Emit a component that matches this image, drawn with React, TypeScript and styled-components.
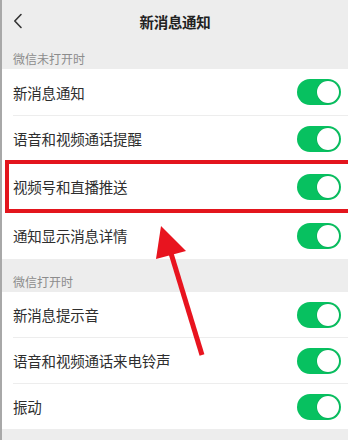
import React from "react";
import styled, { createGlobalStyle } from "styled-components";

const GlobalStyle = createGlobalStyle`
  html, body { margin: 0; padding: 0; background: #ededed; }
  body { font-family: "Noto Sans CJK SC", "Noto Sans", sans-serif; }
  * { box-sizing: border-box; }
`;

const Page = styled.div`
  position: relative;
  width: 348px;
  height: 440px;
  overflow: hidden;
  background: #ededed;
  border-left: 2px solid #a8a8a8;
  display: flex;
  flex-direction: column;
`;

const Header = styled.header`
  height: 42px;
  display: grid;
  grid-template-columns: 44px 1fr 44px;
  align-items: center;
`;

const Back = styled.div`
  display: flex;
  align-items: center;
  padding-left: 11px;
  height: 100%;
`;

const Title = styled.h1`
  margin: 0;
  text-align: center;
  font-size: 14.5px;
  font-weight: 700;
  color: #222;
  letter-spacing: -0.3px;
`;

const SectionLabel = styled.div<{ $h: number }>`
  height: ${(p) => p.$h}px;
  display: flex;
  align-items: flex-end;
  padding: 0 0 2px 11px;
  font-size: 12px;
  line-height: 16px;
  color: #8c8c8c;
`;

const Group = styled.div`
  background: #ffffff;
  padding-left: 11px;
`;

const Row = styled.div<{ $h: number; $last?: boolean }>`
  position: relative;
  height: ${(p) => p.$h}px;
  display: flex;
  align-items: center;
  justify-content: space-between;
  padding-right: 7px;
  border-bottom: ${(p) => (p.$last ? "none" : "1px solid #ededed")};
`;

const Label = styled.span`
  font-size: 14.5px;
  color: #2e2e2e;
  letter-spacing: -0.2px;
`;

const Switch = styled.span`
  position: relative;
  width: 44px;
  height: 26px;
  border-radius: 13px;
  background: #07c160;
  display: flex;
  align-items: center;
  justify-content: flex-end;
  padding-right: 2px;
`;

const Knob = styled.span`
  width: 22px;
  height: 22px;
  border-radius: 50%;
  background: #ffffff;
  box-shadow: 0 0 0 0.5px rgba(0, 0, 0, 0.12);
`;

const Highlight = styled.div`
  position: absolute;
  top: -2px;
  bottom: -2px;
  left: -8px;
  right: -30px;
  border: 4px solid #e3151d;
  pointer-events: none;
`;

const Arrow = styled.svg`
  position: absolute;
  left: 0;
  top: 0;
  pointer-events: none;
`;

const Fill = styled.div`
  flex: 1;
`;

type Item = { label: string; h: number; highlight?: boolean };

const group1: Item[] = [
  { label: "新消息通知", h: 47 },
  { label: "语音和视频通话提醒", h: 46 },
  { label: "视频号和直播推送", h: 50, highlight: true },
  { label: "通知显示消息详情", h: 47 },
];

const group2: Item[] = [
  { label: "新消息提示音", h: 46 },
  { label: "语音和视频通话来电铃声", h: 46 },
  { label: "振动", h: 45 },
];

const Toggle = () => (
  <Switch>
    <Knob />
  </Switch>
);

const List = ({ items }: { items: Item[] }) => (
  <Group>
    {items.map((it, i) => (
      <Row key={it.label} $h={it.h} $last={i === items.length - 1}>
        <Label>{it.label}</Label>
        <Toggle />
        {it.highlight && <Highlight />}
      </Row>
    ))}
  </Group>
);

export default function App() {
  return (
    <>
      <GlobalStyle />
      <Page>
        <Header>
          <Back>
            <svg width="10" height="16" viewBox="0 0 10 16">
              <polyline
                points="8,1.5 1.8,8 8,14.5"
                fill="none"
                stroke="#333"
                strokeWidth="1.6"
                strokeLinecap="round"
                strokeLinejoin="round"
              />
            </svg>
          </Back>
          <Title>新消息通知</Title>
          <span />
        </Header>
        <SectionLabel $h={27}>微信未打开时</SectionLabel>
        <List items={group1} />
        <SectionLabel $h={33}>微信打开时</SectionLabel>
        <List items={group2} />
        <Fill />
        <Arrow width="348" height="440" viewBox="0 0 348 440">
          <line x1="200" y1="355" x2="168" y2="250" stroke="#e8141f" strokeWidth="5" />
          <polygon points="159,226 154,259 184,251" fill="#e8141f" />
        </Arrow>
      </Page>
    </>
  );
}
